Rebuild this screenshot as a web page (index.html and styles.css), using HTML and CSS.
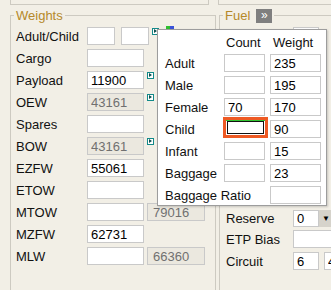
FILE: index.html
```html
<!DOCTYPE html>
<html lang="en">
<head>
  <meta charset="UTF-8" />
  <title>Weights</title>
  <link rel="stylesheet" href="styles.css">
</head>
<body>
  <div class="top">
    <div class="top-box top-left"></div>
    <div class="top-box top-right"></div>
  </div>

  <div class="main">
    <fieldset class="group weights">
      <legend>Weights</legend>
      <div class="rows">
        <div class="row">
          <label>Adult/Child</label>
          <input class="w-sm" />
          <input class="w-sm gap" />
          <span class="go"></span>
          <span class="pax-icon"></span>
        </div>
        <div class="row"><label>Cargo</label><input class="w-md" /></div>
        <div class="row"><label>Payload</label><input class="w-md" value="11900" /><span class="go"></span></div>
        <div class="row"><label>OEW</label><input class="w-md ro" value="43161" readonly /><span class="go"></span></div>
        <div class="row"><label>Spares</label><input class="w-md" /></div>
        <div class="row"><label>BOW</label><input class="w-md ro" value="43161" readonly /><span class="go"></span></div>
        <div class="row"><label>EZFW</label><input class="w-md" value="55061" /></div>
        <div class="row"><label>ETOW</label><input class="w-md" /></div>
        <div class="row"><label>MTOW</label><input class="w-md" /><input class="max ro" value="79016" readonly /></div>
        <div class="row"><label>MZFW</label><input class="w-md" value="62731" /></div>
        <div class="row"><label>MLW</label><input class="w-md" /><input class="max ro" value="66360" readonly /></div>
      </div>
    </fieldset>

    <fieldset class="group fuel">
      <legend><span>Fuel</span><span class="more">&raquo;</span></legend>
      <div class="rows fuel-rows">
        <div class="row"><label></label><input class="w-fuel" /></div>
        <div class="row reserve">
          <label>Reserve</label>
          <input class="w-fuel" value="0" />
          <span class="drop">&#9660;</span>
        </div>
        <div class="row etp"><label>ETP Bias</label><input class="w-wide" /></div>
        <div class="row circuit">
          <label>Circuit</label>
          <input class="w-fuel" value="6" />
          <input class="w-cut" value="4" />
        </div>
      </div>
    </fieldset>
  </div>

  <div class="popup">
    <span class="head count-head">Count</span>
    <span class="head weight-head">Weight</span>

    <label>Adult</label><input class="cnt" /><input class="wt" value="235" />
    <label>Male</label><input class="cnt" /><input class="wt" value="195" />
    <label>Female</label><input class="cnt" value="70" /><input class="wt" value="170" />
    <label>Child</label><input class="cnt focus" /><input class="wt" value="90" />
    <label>Infant</label><input class="cnt" /><input class="wt" value="15" />
    <label>Baggage</label><input class="cnt" /><input class="wt" value="23" />
    <label class="wide-label">Baggage Ratio</label><input class="wt" />
  </div>
</body>
</html>
```

FILE: styles.css
```css
body {
  margin: 0;
  width: 331px;
  height: 290px;
  overflow: hidden;
  position: relative;
  background: #f2efe6;
  font-family: "Liberation Sans", Arial, sans-serif;
  font-size: 13px;
  color: #111;
}

/* bottom of the panels above */
.top {
  display: flex;
  height: 5px;
}
.top-box {
  height: 4px;
  border: 1px solid #cdcac1;
  border-top: 0;
}
.top-left {
  margin-left: 10px;
  width: 197px;
}
.top-right {
  margin-left: 9px;
  flex: 1;
  border-right: 0;
}

.main {
  display: flex;
  align-items: flex-start;
  margin-top: 3px;
}

.group {
  box-sizing: border-box;
  flex: none;
  margin: 0;
  padding: 4px 0 0 3px;
  min-width: 0;
  height: 282px;
  border: 1px solid #cdcac1;
  border-bottom: 0;
}
.group legend {
  padding: 0 2px;
  height: 15px;
  line-height: 15px;
  color: #b5892a;
}
.weights {
  margin-left: 10px;
  width: 206px;
}
.fuel {
  margin-left: 3px;
  width: 112px;
  border-right: 0;
  overflow: hidden;
}
.fuel legend {
  display: flex;
  align-items: center;
}
.more {
  margin-left: 6px;
  width: 16px;
  height: 14px;
  line-height: 13px;
  text-align: center;
  background: #7f7f7f;
  color: #fff;
  font-size: 12px;
}

.rows {
  display: flex;
  flex-direction: column;
  gap: 4px;
  margin-left: 2px;
}
.row {
  display: flex;
  align-items: center;
  height: 18px;
}
.row label {
  flex: none;
  width: 71px;
}

input {
  box-sizing: border-box;
  height: 18px;
  margin: 0;
  padding: 0 3px;
  border: 1px solid #c9c9c9;
  background: #fff;
  font: inherit;
  color: #000;
  outline: none;
  flex: none;
}
.w-sm { width: 28px; }
.w-md { width: 57px; }
.gap { margin-left: 6px; }
.ro {
  background: #ebe8df;
  color: #707070;
}
.max {
  width: 58px;
  margin-left: 3px;
  padding-left: 5px;
}

.go {
  flex: none;
  align-self: flex-start;
  box-sizing: border-box;
  width: 7px;
  height: 7px;
  margin: 1px 0 0 3px;
  border: 1px solid #138a8a;
  background: #fff;
  position: relative;
}
.go::after {
  content: "";
  position: absolute;
  left: 1px;
  top: 0;
  border-left: 3px solid #0d4f4f;
  border-top: 2.5px solid transparent;
  border-bottom: 2.5px solid transparent;
}
.pax-icon {
  flex: none;
  align-self: flex-start;
  width: 8px;
  height: 4px;
  margin: -1px 0 0 7px;
  background: linear-gradient(90deg, #2fbf2f 0 4px, #3a52d8 4px);
}

/* fuel side */
.fuel-rows {
  gap: 0;
  margin-left: 3px;
}
.fuel-rows .row label { width: 67px; }
.w-fuel { width: 26px; }
.w-wide { width: 38px; border-right: 0; }
.w-cut {
  width: 7px;
  margin-left: 5px;
  border-right: 0;
  padding: 0 0 0 3px;
}
.reserve {
  margin-top: 165px;
  height: 17px;
}
.reserve input { height: 17px; }
.drop {
  flex: none;
  width: 12px;
  height: 17px;
  background: #d6d3cb;
  font-size: 8px;
  line-height: 17px;
  text-indent: 3px;
  color: #000;
  overflow: hidden;
}
.etp { margin-top: 3px; }
.circuit { margin-top: 4px; }

/* passenger weights dropdown */
.popup {
  position: absolute;
  left: 157px;
  top: 29px;
  box-sizing: border-box;
  width: 170px;
  height: 177px;
  padding: 5px 5px 0 7px;
  border: 1px solid #9d9d9d;
  background: #fff;
  box-shadow: 1px 1px 2px rgba(0, 0, 0, 0.18);
  display: grid;
  grid-template-columns: 59px 46px 51px;
  grid-template-rows: 15px;
  grid-auto-rows: 18px;
  row-gap: 4px;
  align-items: center;
}
.popup .head {
  line-height: 15px;
}
.count-head {
  grid-column: 2;
  padding-left: 2px;
}
.weight-head {
  grid-column: 3;
  padding-left: 3px;
}
.popup label {
  grid-column: 1;
  white-space: nowrap;
}
.popup .cnt { width: 41px; }
.popup .wt {
  grid-column: 3;
  width: 51px;
}
.popup .wide-label {
  grid-column: 1 / 3;
}
.popup .focus {
  width: 45px;
  height: 21px;
  margin: -3px 0 0 -1px;
  border: 3px solid #ee5a24;
  box-shadow: inset 0 1px 0 #31c431, inset 0 0 0 1px #fff, inset 0 0 0 2px #111;
  align-self: start;
}
```
